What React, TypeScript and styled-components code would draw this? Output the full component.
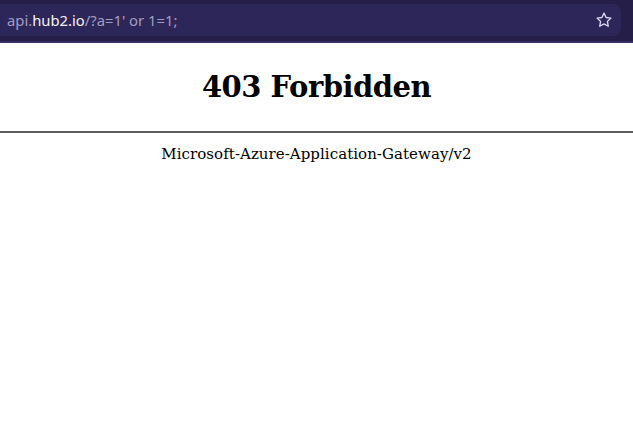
import React from "react";
import styled, { createGlobalStyle } from "styled-components";

const GlobalStyle = createGlobalStyle`
  html, body {
    margin: 0;
    padding: 0;
    background: #ffffff;
  }
`;

const Toolbar = styled.div`
  height: 41px;
  background: #241e48;
  border-bottom: 2px solid #362d68;
  display: flex;
  align-items: center;
  padding-right: 12px;
`;

const UrlField = styled.div`
  flex: 1;
  height: 32px;
  margin-top: -1px;
  background: #2d2658;
  border-radius: 0 8px 8px 0;
  display: flex;
  align-items: center;
  justify-content: space-between;
  padding: 0 8px 0 7px;
  font-family: "Noto Sans", "Open Sans", sans-serif;
  font-size: 14.8px;
  color: #a39dc2;
`;

const UrlText = styled.span`
  white-space: pre;
`;

const Host = styled.span`
  color: #f4f2fb;
`;

const StarButton = styled.svg`
  width: 18px;
  height: 18px;
  color: #dcd6f2;
`;

const Page = styled.main`
  font-family: "DejaVu Serif", "Liberation Serif", serif;
  color: #000;
  text-align: center;
  padding-top: 1px;
`;

const Title = styled.h1`
  margin: 23px 0 0;
  font-size: 29px;
  font-weight: bold;
  line-height: 40px;
  letter-spacing: -0.5px;
`;

const Rule = styled.hr`
  margin: 24px 0 0;
  border: none;
  height: 2px;
  background: #5e5e5e;
`;

const Server = styled.div`
  margin-top: 11px;
  font-size: 15px;
  line-height: 20px;
  letter-spacing: 0.05px;
`;

export default function App() {
  return (
    <>
      <GlobalStyle />
      <Toolbar>
        <UrlField>
          <UrlText>
            api.<Host>hub2.io</Host>/?a=1' or 1=1;
          </UrlText>
          <StarButton viewBox="0 0 24 24" fill="none" stroke="currentColor" strokeWidth="1.8" strokeLinejoin="round">
            <path d="M12 2.8l2.8 5.9 6.4.8-4.7 4.4 1.2 6.4L12 17.2l-5.7 3.1 1.2-6.4-4.7-4.4 6.4-.8z" />
          </StarButton>
        </UrlField>
      </Toolbar>
      <Page>
        <Title>403 Forbidden</Title>
        <Rule />
        <Server>Microsoft-Azure-Application-Gateway/v2</Server>
      </Page>
    </>
  );
}
